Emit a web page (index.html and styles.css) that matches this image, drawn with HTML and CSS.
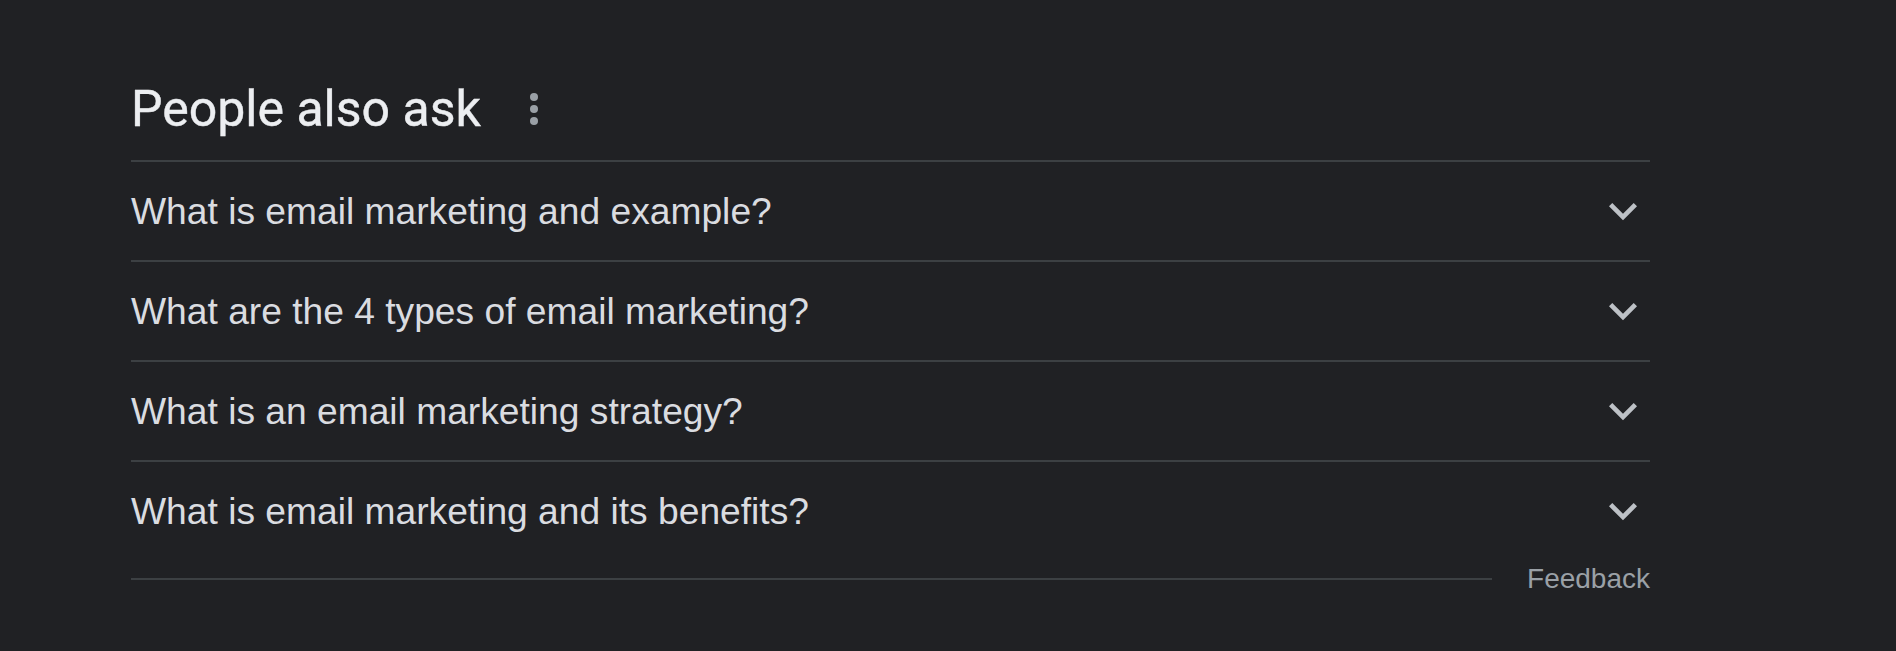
FILE: index.html
```html
<!DOCTYPE html>
<html lang="en">
<head>
<meta charset="utf-8">
<title>People also ask</title>
<link rel="stylesheet" href="styles.css">
</head>
<body>
<div class="page">
  <section class="paa">
    <div class="paa-head">
      <h2 class="paa-title">People also ask</h2>
      <svg class="more" viewBox="0 0 24 24" aria-hidden="true">
        <circle cx="12" cy="6" r="2"/>
        <circle cx="12" cy="12" r="2"/>
        <circle cx="12" cy="18" r="2"/>
      </svg>
    </div>
    <div class="q-list">
      <div class="q-row">
        <span class="q-text">What is email marketing and example?</span>
        <svg class="chev" viewBox="0 0 24 24" aria-hidden="true"><path d="M16.59 8.59L12 13.17 7.41 8.59 6 10l6 6 6-6z"/></svg>
      </div>
      <div class="q-row">
        <span class="q-text">What are the 4 types of email marketing?</span>
        <svg class="chev" viewBox="0 0 24 24" aria-hidden="true"><path d="M16.59 8.59L12 13.17 7.41 8.59 6 10l6 6 6-6z"/></svg>
      </div>
      <div class="q-row">
        <span class="q-text">What is an email marketing strategy?</span>
        <svg class="chev" viewBox="0 0 24 24" aria-hidden="true"><path d="M16.59 8.59L12 13.17 7.41 8.59 6 10l6 6 6-6z"/></svg>
      </div>
      <div class="q-row last">
        <span class="q-text">What is email marketing and its benefits?</span>
        <svg class="chev" viewBox="0 0 24 24" aria-hidden="true"><path d="M16.59 8.59L12 13.17 7.41 8.59 6 10l6 6 6-6z"/></svg>
      </div>
    </div>
    <div class="paa-foot">
      <div class="foot-line"></div>
      <span class="feedback">Feedback</span>
    </div>
  </section>
</div>
</body>
</html>
```
FILE: styles.css
```css
html, body {
  margin: 0;
  padding: 0;
  background: #202124;
}
body {
  width: 1896px;
  height: 651px;
  overflow: hidden;
  font-family: "Liberation Sans", Arial, sans-serif;
}
.page {
  padding: 79px 0 0 131px;
}
.paa {
  width: 1519px;
}
.paa-head {
  display: flex;
  align-items: center;
  height: 60px;
  margin-bottom: 21px;
}
.paa-title {
  margin: 0;
  font-family: Roboto, "Open Sans", sans-serif;
  font-weight: 400;
  font-size: 50px;
  line-height: 60px;
  color: #eceef1;
  -webkit-text-stroke: 0.4px #eceef1;
}
.more {
  width: 48px;
  height: 48px;
  margin-left: 29px;
  fill: #9aa0a6;
}
.q-list {
  border-top: 2px solid #3c4043;
}
.q-row {
  display: flex;
  align-items: center;
  justify-content: space-between;
  height: 98px;
  border-bottom: 2px solid #3c4043;
}
.q-row.last {
  border-bottom: none;
}
.q-text {
  font-size: 37.2px;
  line-height: 44px;
  color: #dadce0;
  padding-bottom: 1px;
}
.chev {
  width: 56px;
  height: 56px;
  fill: #bdc1c6;
  margin-right: -1px;
}
.paa-foot {
  display: flex;
  align-items: center;
  height: 40px;
  margin-top: -1px;
}
.foot-line {
  flex: 1;
  height: 2px;
  background: #3c4043;
  margin-right: 35px;
}
.feedback {
  font-size: 28px;
  line-height: 40px;
  color: #9aa0a6;
}
```
